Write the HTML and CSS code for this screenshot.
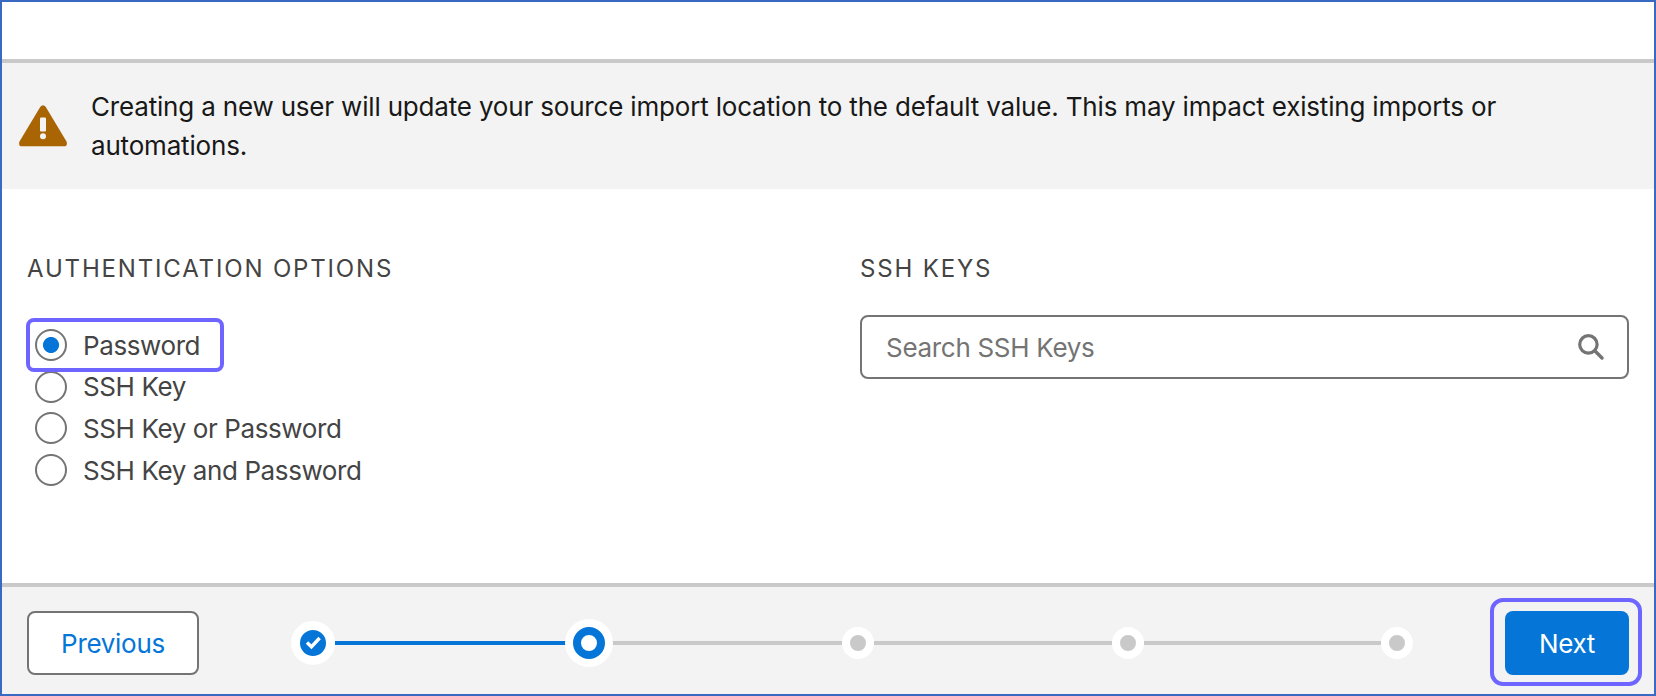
FILE: index.html
```
<!DOCTYPE html>
<html lang="en">
<head>
    <meta charset="UTF-8">
    <meta name="viewport" content="width=device-width, initial-scale=1.0">
    <title>Authentication Options</title>
    <link rel="stylesheet" href="styles.css">
</head>
<body>

    <div class="modal">
        <header class="modal-header"></header>

        <!-- Warning -->
        <div class="notice">
            <svg class="notice-icon" viewBox="0 0 48 42" aria-hidden="true">
                <path fill="#a96404" d="M21.2 1.9Q24 -1.4 26.8 1.9L47.5 36.5Q49 41 45 41.3H3Q-1 41 .5 36.5Z"/>
                <rect x="21" y="12.5" width="6" height="14" rx="1" fill="#f3f3f3"/>
                <circle cx="24" cy="31.2" r="3" fill="#f3f3f3"/>
            </svg>
            <p class="notice-text">Creating a new user will update your source import location to the default value. This may impact existing imports or automations.</p>
        </div>

        <main class="modal-content">
            <section class="column">
                <h2 class="section-title">Authentication Options</h2>
                <div class="radio-group">
                    <label class="radio highlighted"><input type="radio" name="auth" checked><span>Password</span></label>
                    <label class="radio"><input type="radio" name="auth"><span>SSH Key</span></label>
                    <label class="radio"><input type="radio" name="auth"><span>SSH Key or Password</span></label>
                    <label class="radio"><input type="radio" name="auth"><span>SSH Key and Password</span></label>
                </div>
            </section>

            <section class="column">
                <h2 class="section-title">SSH Keys</h2>
                <div class="search">
                    <input type="text" placeholder="Search SSH Keys">
                    <svg class="search-icon" viewBox="0 0 26 26" fill="none" stroke="#747474" aria-hidden="true">
                        <circle cx="10.4" cy="10.4" r="8.7" stroke-width="3.2"/>
                        <path d="M16.8 16.8L24 24" stroke-width="3.4" stroke-linecap="round"/>
                    </svg>
                </div>
            </section>
        </main>

        <footer class="modal-footer">
            <button class="btn btn-neutral">Previous</button>

            <!-- Progress -->
            <div class="progress">
                <span class="marker completed">
                    <svg viewBox="0 0 26 26" aria-hidden="true">
                        <circle cx="13" cy="13" r="13" fill="#0576d7"/>
                        <path d="M7 12.6L11.4 16.8L19.6 8" fill="none" stroke="#fff" stroke-width="3.4"/>
                    </svg>
                </span>
                <span class="line done"></span>
                <span class="marker active"></span>
                <span class="line"></span>
                <span class="marker"></span>
                <span class="line"></span>
                <span class="marker"></span>
                <span class="line"></span>
                <span class="marker"></span>
            </div>

            <button class="btn btn-brand">Next</button>
        </footer>
    </div>

</body>
</html>
```
FILE: styles.css
```
*, *::after {
    box-sizing: border-box;
}

body {
    margin: 0;
    font-family: Inter, 'Liberation Sans', sans-serif;
    font-size: 26px;
    letter-spacing: -0.3px;
    color: #444;
}

.modal {
    display: flex;
    flex-direction: column;
    height: 100vh;
    border: 2px solid #3a69c4;
    background-color: #fff;
}

.modal-header {
    height: 61px;
    border-bottom: 4px solid #c9c9c9;
}

.notice {
    display: flex;
    align-items: center;
    gap: 24px;
    padding: 24px 100px 24px 17px;
    background-color: #f3f3f3;
    color: #181818;
}

.notice-icon {
    flex: none;
    width: 48px;
    height: 42px;
}

.notice-text {
    margin: 0;
    line-height: 39px;
    letter-spacing: -0.18px;
}

.modal-content {
    display: grid;
    grid-template-columns: 769px 769px;
    gap: 64px;
    flex: 1;
    padding: 60px 25px 0;
}

.section-title {
    margin: 0;
    font-size: 24px;
    font-weight: 400;
    line-height: 39px;
    letter-spacing: 1.83px;
    text-transform: uppercase;
}

.radio-group {
    display: flex;
    flex-direction: column;
    gap: 9.7px;
    padding: 41px 0 0 8px;
}

.radio {
    position: relative;
    display: flex;
    align-items: center;
    align-self: flex-start;
    gap: 16px;
    height: 32px;
    letter-spacing: -0.4px;
}

.radio input {
    appearance: none;
    width: 32px;
    height: 32px;
    margin: 0;
    border: 2px solid #747474;
    border-radius: 50%;
    background-color: #fff;
}

.radio input:checked {
    background: radial-gradient(circle, #0576d7 7.6px, #fff 8.4px);
}

/* Focus frame around the chosen option */
.highlighted::after {
    content: '';
    position: absolute;
    top: -11px;
    left: -9px;
    z-index: 1;
    width: 198px;
    height: 54px;
    border: 4px solid #6e64ff;
    border-radius: 8px;
}

.search {
    display: flex;
    align-items: center;
    height: 64px;
    margin-top: 27px;
    padding: 0 23px 0 24px;
    border: 2px solid #747474;
    border-radius: 8px;
}

.search input {
    flex: 1;
    padding: 0;
    border: none;
    outline: none;
    font: inherit;
    letter-spacing: inherit;
}

.search input::placeholder {
    color: #747474;
}

.search-icon {
    width: 26px;
    height: 26px;
}

.modal-footer {
    display: flex;
    align-items: center;
    justify-content: space-between;
    height: 111px;
    padding: 5px 25px 0;
    border-top: 4px solid #c9c9c9;
    background-color: #f3f3f3;
}

.btn {
    position: relative;
    height: 64px;
    padding: 0;
    border-radius: 8px;
    font: inherit;
    letter-spacing: inherit;
}

.btn-neutral {
    width: 172px;
    border: 2px solid #747474;
    background-color: #fff;
    color: #0576d7;
}

.btn-brand {
    width: 124px;
    border: none;
    background-color: #0576d7;
    color: #fff;
}

.btn-brand::after {
    content: '';
    position: absolute;
    inset: -13px -13px -11px -15px;
    border: 4px solid #6e64ff;
    border-radius: 13px;
}

.progress {
    display: flex;
    align-items: center;
    width: 1122px;
}

.line {
    flex: 1;
    height: 4px;
    background-color: #c9c9c9;
}

.line.done {
    background-color: #0576d7;
}

.marker {
    width: 32px;
    height: 32px;
    border: 8px solid #fff;
    border-radius: 50%;
    background-color: #c9c9c9;
}

.marker.completed {
    width: 44px;
    height: 44px;
    border-width: 9px;
    background-color: #fff;
}

.marker.completed svg {
    display: block;
}

.marker.active {
    z-index: 1;
    border-color: #0576d7;
    background-color: #fff;
    box-shadow: 0 0 0 8px #fff;
}
```
